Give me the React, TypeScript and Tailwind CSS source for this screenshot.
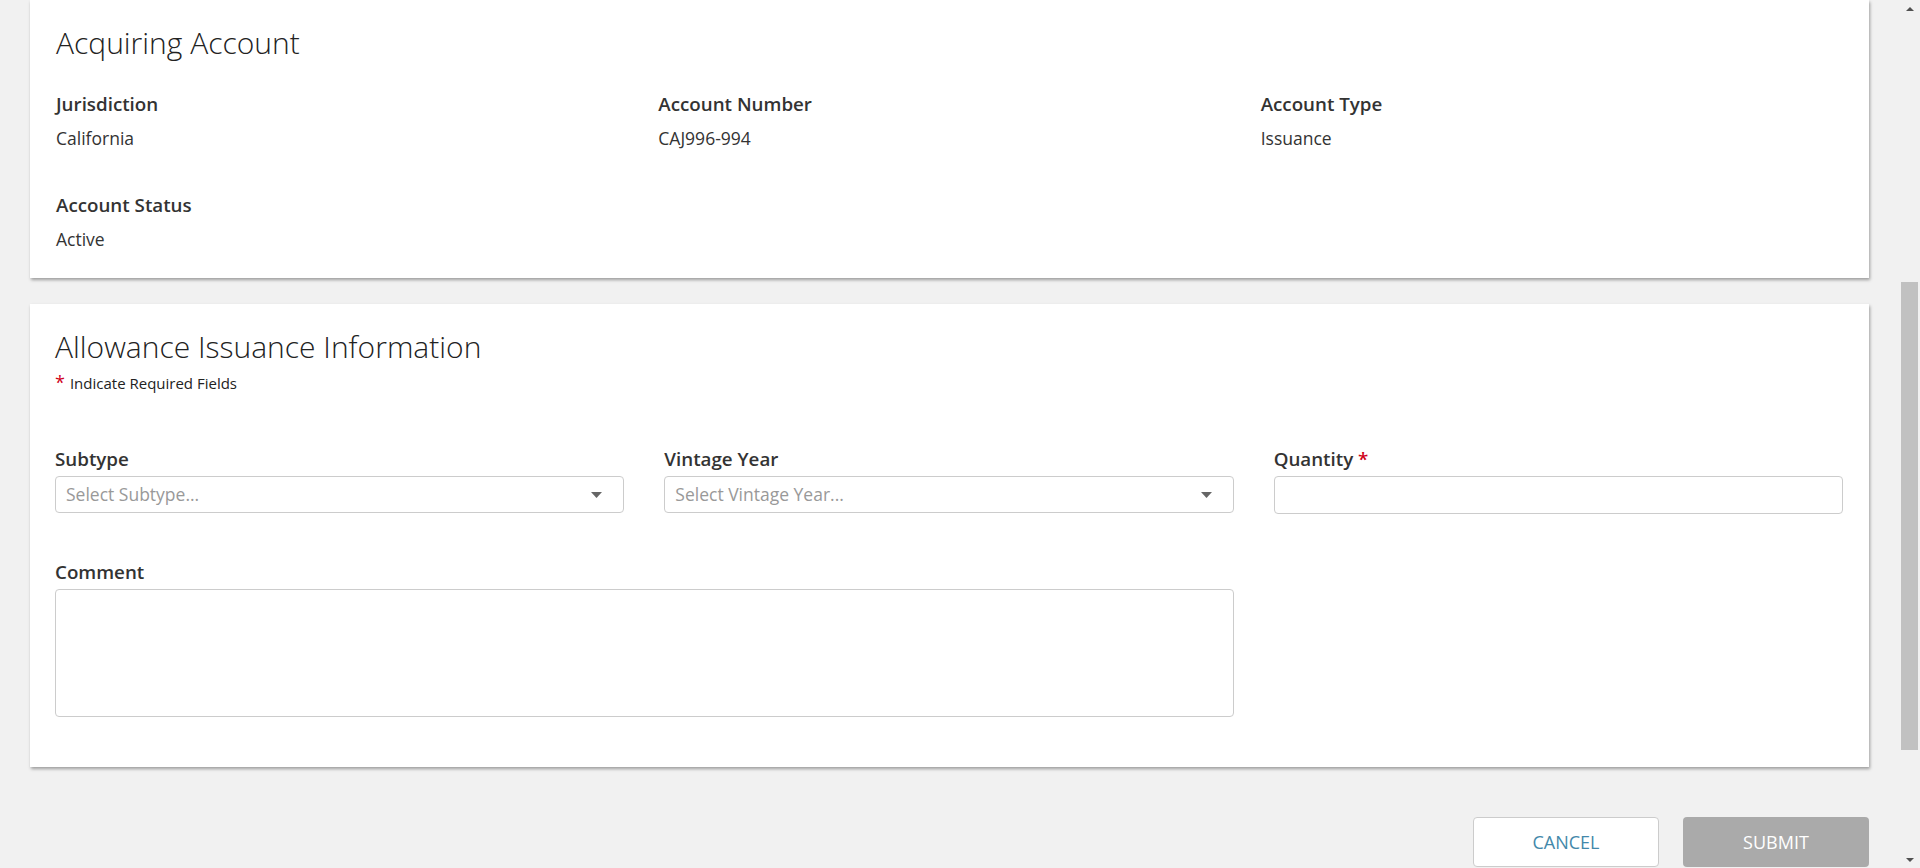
import React from 'react'

const font = { fontFamily: '"Open Sans", "Noto Sans", Arial, sans-serif' }

// dropdown caret used in the select boxes
function Caret() {
  return (
    <svg width="11" height="6" viewBox="0 0 11 6" className="shrink-0">
      <path d="M0 0 L11 0 L5.5 6 Z" fill="#666" />
    </svg>
  )
}

function InfoItem({ label, value }: { label: string; value: string }) {
  return (
    <div>
      <div className="pt-[1px] text-[18.75px] leading-[26px] font-semibold text-[#333]">{label}</div>
      <div className="mt-[10px] text-[17.5px] leading-[23px] text-[#333]">{value}</div>
    </div>
  )
}

function FieldLabel({ children, required }: { children: React.ReactNode; required?: boolean }) {
  return (
    <div className="pt-[1px] text-[18.75px] leading-[26px] font-semibold text-[#333]">
      {children}
      {required && <span className="text-[#d0021b]"> *</span>}
    </div>
  )
}

function SelectBox({ placeholder }: { placeholder: string }) {
  return (
    <div className="mt-[4px] h-[37px] flex items-center justify-between border border-[#ccc] rounded-[4px] bg-white pl-[10px] pr-[21px]">
      <span className="text-[17.5px] text-[#999]">{placeholder}</span>
      <Caret />
    </div>
  )
}

export default function App() {
  return (
    <div className="flex w-[1920px] h-[868px] overflow-hidden bg-[#f1f1f1]" style={font}>
      <div className="flex-1 pl-[30px] pr-[32px]">
        {/* Acquiring account card */}
        <div className="bg-white shadow-[1px_2px_3px_rgba(0,0,0,0.35)] pt-[22px] pb-[27px] pl-[26px] pr-[6px]">
          <h2 className="text-[30px] leading-[41px] font-light text-[#222]">Acquiring Account</h2>
          <div className="mt-[27px] grid grid-cols-3 gap-y-[41px]">
            <InfoItem label="Jurisdiction" value="California" />
            <InfoItem label="Account Number" value="CAJ996-994" />
            <InfoItem label="Account Type" value="Issuance" />
            <InfoItem label="Account Status" value="Active" />
          </div>
        </div>

        {/* Allowance issuance card */}
        <div className="mt-[26px] bg-white shadow-[1px_2px_3px_rgba(0,0,0,0.35)] pt-[22px] pb-[50px] pl-[25px] pr-[26px]">
          <h2 className="text-[30px] leading-[41px] font-light text-[#222]">Allowance Issuance Information</h2>
          <div className="mt-[6px] h-[20px] text-[15px] leading-[20px] text-[#222]">
            <span className="text-[#d0021b] text-[18px] leading-[0] mr-[5px]">*</span>Indicate Required Fields
          </div>

          <div className="mt-[52px] grid grid-cols-3 gap-x-[40px] gap-y-[44px]">
            <div>
              <FieldLabel>Subtype</FieldLabel>
              <SelectBox placeholder="Select Subtype..." />
            </div>
            <div>
              <FieldLabel>Vintage Year</FieldLabel>
              <SelectBox placeholder="Select Vintage Year..." />
            </div>
            <div>
              <FieldLabel required>Quantity</FieldLabel>
              <input
                type="text"
                className="mt-[4px] w-full h-[38px] border border-[#ccc] rounded-[4px] bg-white px-[10px] text-[17.5px] outline-none"
              />
            </div>
            <div className="col-span-2">
              <FieldLabel>Comment</FieldLabel>
              <textarea className="mt-[4px] block w-full h-[128px] border border-[#ccc] rounded-[4px] bg-white px-[10px] py-[6px] text-[17.5px] resize-none outline-none" />
            </div>
          </div>
        </div>

        {/* actions */}
        <div className="mt-[50px] flex justify-end gap-[24px]">
          <button className="w-[186px] h-[50px] bg-white border border-[#ccc] rounded-[4px] text-[18px] text-[#4388aa]">
            CANCEL
          </button>
          <button className="w-[186px] h-[50px] bg-[#aaaaaa] rounded-[4px] text-[18px] text-white">
            SUBMIT
          </button>
        </div>
      </div>

      {/* fake scrollbar, page is scrolled down */}
      <div className="w-[19px] h-full flex flex-col">
        <div className="h-[17px] flex items-center justify-center pr-[2px]">
          <svg width="8" height="4" viewBox="0 0 8 4">
            <path d="M0 4 L4 0 L8 4 Z" fill="#505050" />
          </svg>
        </div>
        <div className="h-[265px]" />
        <div className="w-[17px] h-[468px] bg-[#c1c1c1]" />
        <div className="flex-1" />
        <div className="h-[17px] flex items-center justify-center pr-[2px]">
          <svg width="8" height="4" viewBox="0 0 8 4">
            <path d="M0 0 L8 0 L4 4 Z" fill="#505050" />
          </svg>
        </div>
      </div>
    </div>
  )
}
